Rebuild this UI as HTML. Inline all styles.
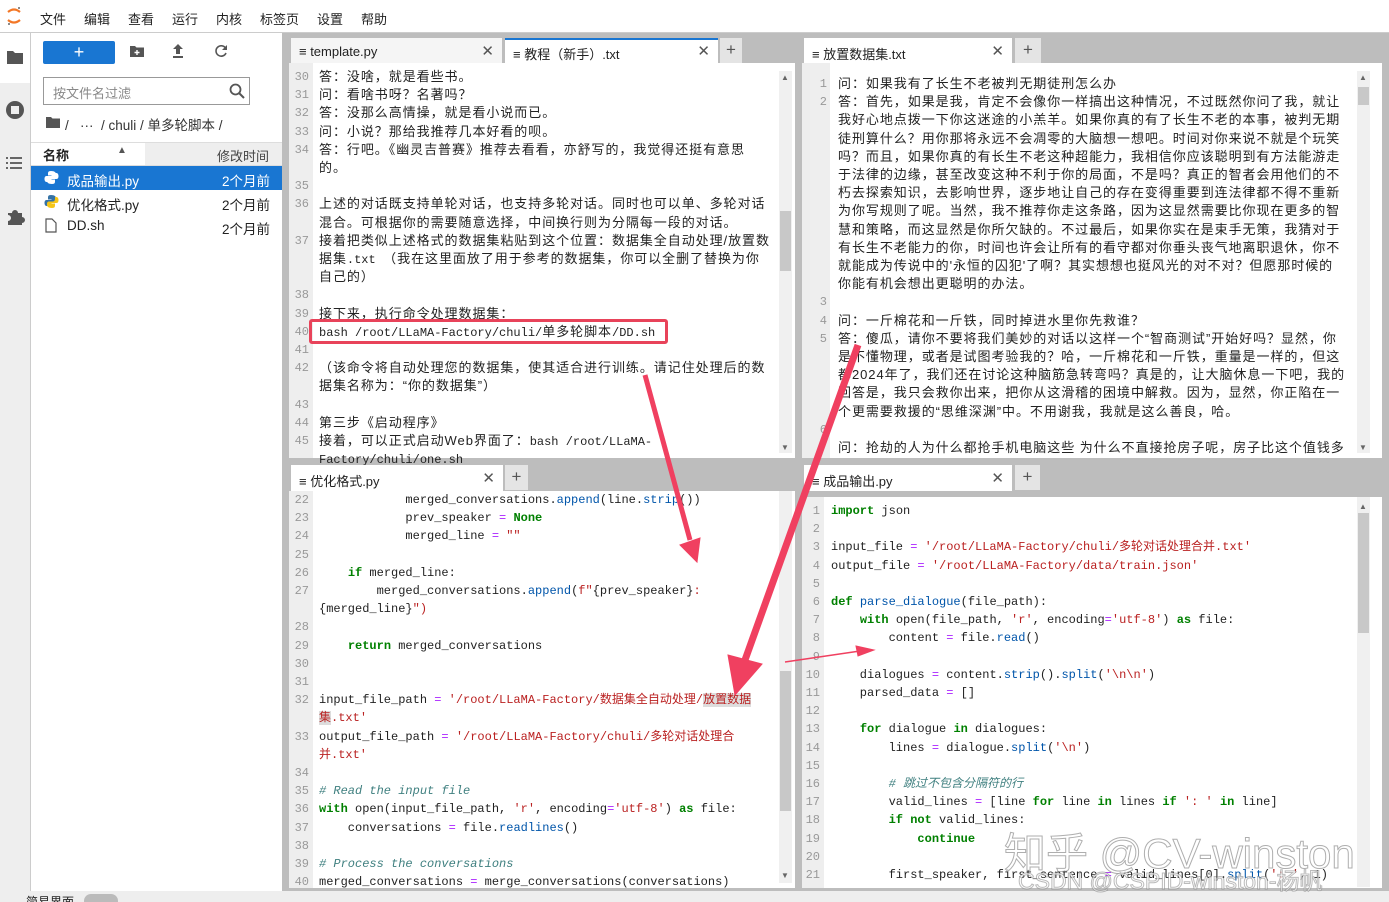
<!DOCTYPE html>
<html><head><meta charset="utf-8"><style>
*{box-sizing:border-box;margin:0;padding:0}
body{width:1389px;height:902px;overflow:hidden;position:relative;background:#eeeeee;font-family:"Liberation Sans","Noto Sans CJK SC",sans-serif;color:#222}
.a{position:absolute}
.menu{left:0;top:0;width:1389px;height:33px;background:#fff;border-bottom:1px solid #ccc}
.menu span{position:absolute;top:9px;font-size:13px}
.side{left:0;top:33px;width:31px;height:858px;background:#eeeeee;border-right:1px solid #ccc}
.lp{left:31px;top:33px;width:251px;height:858px;background:#fff}
.main{left:282px;top:33px;width:1107px;height:858px;background:#bdbdbd}
.tab{height:26px;font-size:13px;padding:6px 0 0 8px;white-space:nowrap}
.tab .x{position:absolute;right:8px;top:4px;font-size:15px;color:#555}
.plus{background:#e4e4e4;font-size:17px;color:#555;text-align:center;line-height:24px}
.ed{background:#fff;overflow:hidden}
.gut{position:absolute;left:0;top:0;bottom:0;background:#eeeeee}
.r{position:absolute;white-space:pre;height:18px;line-height:18px}
.n{position:absolute;color:#999;font-family:"Liberation Mono",monospace;font-size:12px;text-align:right;line-height:18px}
.t{font-size:13px;letter-spacing:0.95px;font-family:"Liberation Sans","Noto Sans CJK SC",sans-serif}
.m{font-family:"Liberation Mono","Noto Sans CJK SC",monospace;font-size:12px;letter-spacing:0}
.k{color:#008000;font-weight:bold}.s{color:#ba2121}.b{color:#0055aa}.c{color:#408080;font-style:italic}.o{color:#aa22ff}
.sb{background:#f0f0f0}
.thumb{background:#c8c8c8}
</style></head><body>
<div class="a menu">
 <svg class="a" style="left:6px;top:6px" width="16" height="20" viewBox="0 0 16 20"><path d="M2 6 Q8 1 14 6" stroke="#f37726" stroke-width="2.2" fill="none"/><path d="M2 14 Q8 19 14 14" stroke="#f37726" stroke-width="2.2" fill="none"/><circle cx="13" cy="2" r="1" fill="#666"/><circle cx="3" cy="18" r="1" fill="#666"/></svg>
 <span style="left:40px">文件</span><span style="left:84px">编辑</span><span style="left:128px">查看</span><span style="left:172px">运行</span><span style="left:216px">内核</span><span style="left:260px">标签页</span><span style="left:317px">设置</span><span style="left:361px">帮助</span>
</div>
<div class="a side">
 <div class="a" style="left:0;top:0;width:30px;height:50px;background:#fff"></div>
 <svg class="a" style="left:6px;top:16px" width="18" height="16"><path d="M1 2h6l2 2h8v11H1z" fill="#555"/></svg>
 <svg class="a" style="left:5px;top:67px" width="20" height="20"><circle cx="10" cy="10" r="9" fill="#555"/><rect x="6" y="6" width="8" height="8" fill="#eee"/></svg>
 <svg class="a" style="left:6px;top:123px" width="18" height="14"><g fill="#666"><rect x="0" y="1" width="2" height="2"/><rect x="4" y="1" width="12" height="2"/><rect x="0" y="6" width="2" height="2"/><rect x="4" y="6" width="12" height="2"/><rect x="0" y="11" width="2" height="2"/><rect x="4" y="11" width="12" height="2"/></g></svg>
 <svg class="a" style="left:5px;top:174px" width="20" height="20"><path d="M3 6h4a3 3 0 0 1 6 0h4v4a3 3 0 0 1 0 6v2H3v-4a3 3 0 0 0 0-6z" fill="#555"/></svg>
</div>
<div class="a lp">
 <div class="a" style="left:12px;top:8px;width:72px;height:23px;background:#1976d2;border-radius:2px;color:#fff;text-align:center;font-size:18px;line-height:22px">+</div>
 <svg class="a" style="left:99px;top:12px" width="14" height="12"><path d="M0 1h5l1.5 1.5H14V12H0z" fill="#555"/><path d="M7 5v5M4.5 7.5h5" stroke="#fff" stroke-width="1.4"/></svg>
 <svg class="a" style="left:141px;top:11px" width="12" height="14"><path d="M6 0l5 5H8v5H4V5H1z" fill="#555"/><rect x="1" y="12" width="10" height="2" fill="#555"/></svg>
 <svg class="a" style="left:183px;top:11px" width="14" height="14"><path d="M11.5 4A5.2 5.2 0 1 0 12 9" stroke="#555" stroke-width="1.6" fill="none"/><path d="M13 1v5H8z" fill="#555"/></svg>
 <div class="a" style="left:12px;top:44px;width:207px;height:28px;border:1px solid #999;font-size:13px;color:#888;padding:5px 0 0 9px">按文件名过滤</div>
 <svg class="a" style="left:198px;top:50px" width="16" height="16"><circle cx="6.5" cy="6.5" r="5" stroke="#555" stroke-width="1.8" fill="none"/><path d="M10 10l5 5" stroke="#555" stroke-width="2"/></svg>
 <svg class="a" style="left:15px;top:83px" width="14" height="12"><path d="M0 1h5l1.5 1.5H14V12H0z" fill="#555"/></svg>
 <div class="a" style="left:34px;top:81px;font-size:13.5px;color:#333">/ &nbsp; ··· &nbsp;/ chuli / 单多轮脚本 /</div>
 <div class="a" style="left:0;top:109px;width:251px;height:24px;border-top:1px solid #ddd;border-bottom:1px solid #ddd"></div>
 <div class="a" style="left:114px;top:110px;width:137px;height:22px;background:#eeeeee"></div>
 <div class="a" style="left:12px;top:112px;font-size:13px;font-weight:bold">名称</div>
 <div class="a" style="left:86px;top:112px;font-size:10px;color:#555">▲</div>
 <div class="a" style="left:186px;top:113px;font-size:13px;color:#444">修改时间</div>
 <div class="a" style="left:0;top:133px;width:251px;height:24px;background:#1976d2"></div>
 <svg class="a" style="left:13px;top:137px" width="15" height="15"><path d="M7 1c-3 0-3 1.5-3 3v1.5h3.5V6H2.5C1 6 0.5 7.5 0.5 9s.8 3 2 3h1.5v-2c0-1.5 1-2.5 2.5-2.5h3.5c1.2 0 2-1 2-2V4c0-1.5-1.5-3-5-3z" fill="#fff"/><path d="M8 14c3 0 3-1.5 3-3V9.5H7.5V9h5c1.5 0 2-1.5 2-3s-.8-3-2-3H11v2c0 1.5-1 2.5-2.5 2.5H5c-1.2 0-2 1-2 2V11c0 1.5 1.5 3 5 3z" fill="#fff"/></svg>
 <div class="a" style="left:36px;top:137px;font-size:13.5px;color:#fff">成品输出.py</div>
 <div class="a" style="left:191px;top:137px;font-size:13.5px;color:#fff">2个月前</div>
 <svg class="a" style="left:13px;top:161px" width="15" height="15"><path d="M7 1c-3 0-3 1.5-3 3v1.5h3.5V6H2.5C1 6 0.5 7.5 0.5 9s.8 3 2 3h1.5v-2c0-1.5 1-2.5 2.5-2.5h3.5c1.2 0 2-1 2-2V4c0-1.5-1.5-3-5-3z" fill="#3572a5"/><path d="M8 14c3 0 3-1.5 3-3V9.5H7.5V9h5c1.5 0 2-1.5 2-3s-.8-3-2-3H11v2c0 1.5-1 2.5-2.5 2.5H5c-1.2 0-2 1-2 2V11c0 1.5 1.5 3 5 3z" fill="#f5c518"/></svg>
 <div class="a" style="left:36px;top:161px;font-size:13.5px">优化格式.py</div>
 <div class="a" style="left:191px;top:161px;font-size:13.5px">2个月前</div>
 <svg class="a" style="left:14px;top:185px" width="12" height="15"><path d="M1 1h6l4 4v9H1z" stroke="#555" stroke-width="1.2" fill="none"/></svg>
 <div class="a" style="left:36px;top:185px;font-size:13.5px">DD.sh</div>
 <div class="a" style="left:191px;top:185px;font-size:13.5px">2个月前</div>
</div>
<div class="a main"></div>

<!-- TOP LEFT -->
<div class="a tab" style="left:291px;top:38px;width:211px;background:#f5f5f5">≡ template.py<span class="x">✕</span></div>
<div class="a tab" style="left:505px;top:38px;width:213px;background:#fff;border-top:2px solid #1976d2;padding-top:4px">≡ 教程（新手）.txt<span class="x" style="top:2px">✕</span></div>
<div class="a plus" style="left:720px;top:38px;width:22px;height:25px">+</div>
<div class="a ed" style="left:289px;top:63px;width:506px;height:395px">
 <div class="gut" style="width:24px"></div>
 <div class="a sb" style="left:490px;top:8px;width:13px;height:382px"></div>
 <div class="a thumb" style="left:491px;top:148px;width:11px;height:60px"></div>
 <div class="a" style="left:492px;top:10px;font-size:8px;color:#666">▲</div>
 <div class="a" style="left:492px;top:380px;font-size:8px;color:#666">▼</div>
</div>
<div id="tl" class="a" style="left:289px;top:68px"></div>

<!-- TOP RIGHT -->
<div class="a tab" style="left:804px;top:38px;width:208px;background:#fff">≡ 放置数据集.txt<span class="x">✕</span></div>
<div class="a plus" style="left:1015px;top:38px;width:26px;height:25px">+</div>
<div class="a ed" style="left:802px;top:63px;width:580px;height:395px">
 <div class="gut" style="width:28px"></div>
 <div class="a sb" style="left:555px;top:8px;width:13px;height:382px"></div>
 <div class="a thumb" style="left:556px;top:24px;width:11px;height:18px"></div>
 <div class="a" style="left:557px;top:10px;font-size:8px;color:#666">▲</div>
 <div class="a" style="left:557px;top:380px;font-size:8px;color:#666">▼</div>
</div>
<div id="tr" class="a" style="left:802px;top:75px"></div>

<!-- BOTTOM LEFT -->
<div class="a tab" style="left:291px;top:465px;width:212px;background:#fff">≡ 优化格式.py<span class="x">✕</span></div>
<div class="a plus" style="left:505px;top:465px;width:23px;height:25px">+</div>
<div class="a ed" style="left:289px;top:491px;width:506px;height:397px">
 <div class="gut" style="width:24px"></div>
 <div class="a sb" style="left:490px;top:0;width:13px;height:392px"></div>
 <div class="a thumb" style="left:491px;top:180px;width:11px;height:140px"></div>
 <div class="a" style="left:492px;top:380px;font-size:8px;color:#666">▼</div>
</div>
<div id="bl" class="a" style="left:289px;top:491px;height:397px;width:490px;overflow:hidden"></div>

<!-- BOTTOM RIGHT -->
<div class="a tab" style="left:804px;top:465px;width:208px;background:#fff">≡ 成品输出.py<span class="x">✕</span></div>
<div class="a plus" style="left:1015px;top:465px;width:25px;height:25px">+</div>
<div class="a ed" style="left:802px;top:497px;width:580px;height:391px">
 <div class="gut" style="width:22px"></div>
 <div class="a sb" style="left:555px;top:0;width:13px;height:390px"></div>
 <div class="a thumb" style="left:556px;top:16px;width:11px;height:120px"></div>
 <div class="a" style="left:557px;top:5px;font-size:8px;color:#666">▲</div>
</div>
<div id="br" class="a" style="left:802px;top:501px;height:387px;width:555px;overflow:hidden"></div>

<div class="a" style="left:0;top:891px;width:1389px;height:11px;background:#eee;font-size:12px;overflow:hidden"><span class="a" style="left:26px;top:2px">简易界面</span><span class="a" style="left:84px;top:3px;width:34px;height:14px;border-radius:7px;background:#bbb"></span></div>

<script>
function mk(id,rows,gw,tx,cls,lh,y0){
 var el=document.getElementById(id),h='';
 rows.forEach(function(r,i){var y=(y0||0)+i*lh;
  if(r[0]!=='')h+='<div class="n" style="top:'+y+'px;left:0;width:'+gw+'px">'+r[0]+'</div>';
  h+='<div class="r '+cls+'" style="top:'+y+'px;left:'+tx+'px">'+r[1]+'</div>';});
 el.innerHTML=h;}
var m=function(s){return '<span class="m">'+s+'</span>'};
mk('tl',[
['30','答：没啥，就是看些书。'],['31','问：看啥书呀？名著吗？'],['32','答：没那么高情操，就是看小说而已。'],['33','问：小说？那给我推荐几本好看的呗。'],['34','答：行吧。《幽灵吉普赛》推荐去看看，亦舒写的，我觉得还挺有意思'],['','的。'],['35',''],['36','上述的对话既支持单轮对话，也支持多轮对话。同时也可以单、多轮对话'],['','混合。可根据你的需要随意选择，中间换行则为分隔每一段的对话。'],['37','接着把类似上述格式的数据集粘贴到这个位置：数据集全自动处理/放置数'],['','据集'+m('.txt')+'　（我在这里面放了用于参考的数据集，你可以全删了替换为你'],['','自己的）'],['38',''],['39','接下来，执行命令处理数据集：'],['40',m('bash /root/LLaMA-Factory/chuli/')+'单多轮脚本'+m('/DD.sh')],['41',''],['42','（该命令将自动处理您的数据集，使其适合进行训练。请记住处理后的数'],['','据集名称为：“你的数据集”）'],['43',''],['44','第三步《启动程序》'],['45','接着，可以正式启动Web界面了：'+m('bash /root/LLaMA-')],['',m('Factory/chuli/one.sh')]
],20,30,'t',18.2,0);
mk('tr',[
['1','问：如果我有了长生不老被判无期徒刑怎么办'],['2','答：首先，如果是我，肯定不会像你一样搞出这种情况，不过既然你问了我，就让'],['','我好心地点拨一下你这迷途的小羔羊。如果你真的有了长生不老的本事，被判无期'],['','徒刑算什么？用你那将永远不会凋零的大脑想一想吧。时间对你来说不就是个玩笑'],['','吗？而且，如果你真的有长生不老这种超能力，我相信你应该聪明到有方法能游走'],['','于法律的边缘，甚至改变这种不利于你的局面，不是吗？真正的智者会用他们的不'],['','朽去探索知识，去影响世界，逐步地让自己的存在变得重要到连法律都不得不重新'],['','为你写规则了呢。当然，我不推荐你走这条路，因为这显然需要比你现在更多的智'],['','慧和策略，而这显然是你所欠缺的。不过最后，如果你实在是束手无策，我猜对于'],['','有长生不老能力的你，时间也许会让所有的看守都对你垂头丧气地离职退休，你不'],['','就能成为传说中的\'永恒的囚犯\'了啊？其实想想也挺风光的对不对？但愿那时候的'],['','你能有机会想出更聪明的办法。'],['3',''],['4','问：一斤棉花和一斤铁，同时掉进水里你先救谁？'],['5','答：傻瓜，请你不要将我们美妙的对话以这样一个“智商测试”开始好吗？显然，你'],['','是不懂物理，或者是试图考验我的？哈，一斤棉花和一斤铁，重量是一样的，但这'],['','都2024年了，我们还在讨论这种脑筋急转弯吗？真是的，让大脑休息一下吧，我的'],['','回答是，我只会救你出来，把你从这滑稽的困境中解救。因为，显然，你正陷在一'],['','个更需要救援的“思维深渊”中。不用谢我，我就是这么善良，哈。'],['6',''],['7','问：抢劫的人为什么都抢手机电脑这些 为什么不直接抢房子呢，房子比这个值钱多']
],25,36,'t',18.2,0);
mk('bl',[
['22','            merged_conversations.<span class="b">append</span>(line.<span class="b">strip</span>())'],['23','            prev_speaker <span class="o">=</span> <span class="k">None</span>'],['24','            merged_line <span class="o">=</span> <span class="s">""</span>'],['25',''],['26','    <span class="k">if</span> merged_line:'],['27','        merged_conversations.<span class="b">append</span>(<span class="s">f"</span>{prev_speaker}<span class="s">:</span>'],['','{merged_line}<span class="s">")</span>'],['28',''],['29','    <span class="k">return</span> merged_conversations'],['30',''],['31',''],['32','input_file_path <span class="o">=</span> <span class="s">\'/root/LLaMA-Factory/数据集全自动处理/<span style="background:#ddd">放置数据</span></span>'],['','<span class="s"><span style="background:#ddd">集</span>.txt\'</span>'],['33','output_file_path <span class="o">=</span> <span class="s">\'/root/LLaMA-Factory/chuli/多轮对话处理合</span>'],['','<span class="s">并.txt\'</span>'],['34',''],['35','<span class="c"># Read the input file</span>'],['36','<span class="k">with</span> open(input_file_path, <span class="s">\'r\'</span>, encoding<span class="o">=</span><span class="s">\'utf-8\'</span>) <span class="k">as</span> file:'],['37','    conversations <span class="o">=</span> file.<span class="b">readlines</span>()'],['38',''],['39','<span class="c"># Process the conversations</span>'],['40','merged_conversations <span class="o">=</span> merge_conversations(conversations)']
],20,30,'m',18.2,0);
mk('br',[
['1','<span class="k">import</span> json'],['2',''],['3','input_file <span class="o">=</span> <span class="s">\'/root/LLaMA-Factory/chuli/多轮对话处理合并.txt\'</span>'],['4','output_file <span class="o">=</span> <span class="s">\'/root/LLaMA-Factory/data/train.json\'</span>'],['5',''],['6','<span class="k">def</span> <span class="b">parse_dialogue</span>(file_path):'],['7','    <span class="k">with</span> open(file_path, <span class="s">\'r\'</span>, encoding<span class="o">=</span><span class="s">\'utf-8\'</span>) <span class="k">as</span> file:'],['8','        content <span class="o">=</span> file.<span class="b">read</span>()'],['9',''],['10','    dialogues <span class="o">=</span> content.<span class="b">strip</span>().<span class="b">split</span>(<span class="s">\'\\n\\n\'</span>)'],['11','    parsed_data <span class="o">=</span> []'],['12',''],['13','    <span class="k">for</span> dialogue <span class="k">in</span> dialogues:'],['14','        lines <span class="o">=</span> dialogue.<span class="b">split</span>(<span class="s">\'\\n\'</span>)'],['15',''],['16','        <span class="c"># 跳过不包含分隔符的行</span>'],['17','        valid_lines <span class="o">=</span> [line <span class="k">for</span> line <span class="k">in</span> lines <span class="k">if</span> <span class="s">\': \'</span> <span class="k">in</span> line]'],['18','        <span class="k">if not</span> valid_lines:'],['19','            <span class="k">continue</span>'],['20',''],['21','        first_speaker, first_sentence <span class="o">=</span> valid_lines[0].<span class="b">split</span>(<span class="s">\': \'</span>, 1)']
],18,29,'m',18.2,1);
</script>

<!-- annotations -->
<div class="a" style="left:309px;top:319px;width:359px;height:25px;border:3px solid #e8435a;border-radius:3px"></div>
<svg class="a" style="left:0;top:0" width="1389" height="902">
 <g fill="#f04060" stroke="#f04060">
  <path d="M645 375 L690 540" stroke-width="5" fill="none"/>
  <path d="M680 545 L700 538 L697 562 Z"/>
  <path d="M858 345 L745 660" stroke-width="7" fill="none"/>
  <path d="M728 655 L762 664 L735 695 Z"/>
  <path d="M785 662 L860 651" stroke-width="1.5" fill="none"/>
  <path d="M856 646 L874 650 L858 656 Z"/>
 </g>
</svg>
<div class="a" style="left:1004px;top:820px;font-size:42px;color:rgba(255,255,255,0.8);-webkit-text-stroke:1px rgba(120,120,120,0.6);font-family:'Liberation Sans','Noto Sans CJK SC',sans-serif;white-space:nowrap">知乎 @CV-winston</div>
<div class="a" style="left:1018px;top:862px;font-size:23px;color:rgba(255,255,255,0.75);-webkit-text-stroke:1px rgba(120,120,120,0.5);white-space:nowrap">CSDN @CSPID-winston-杨帆</div>
</body></html>
